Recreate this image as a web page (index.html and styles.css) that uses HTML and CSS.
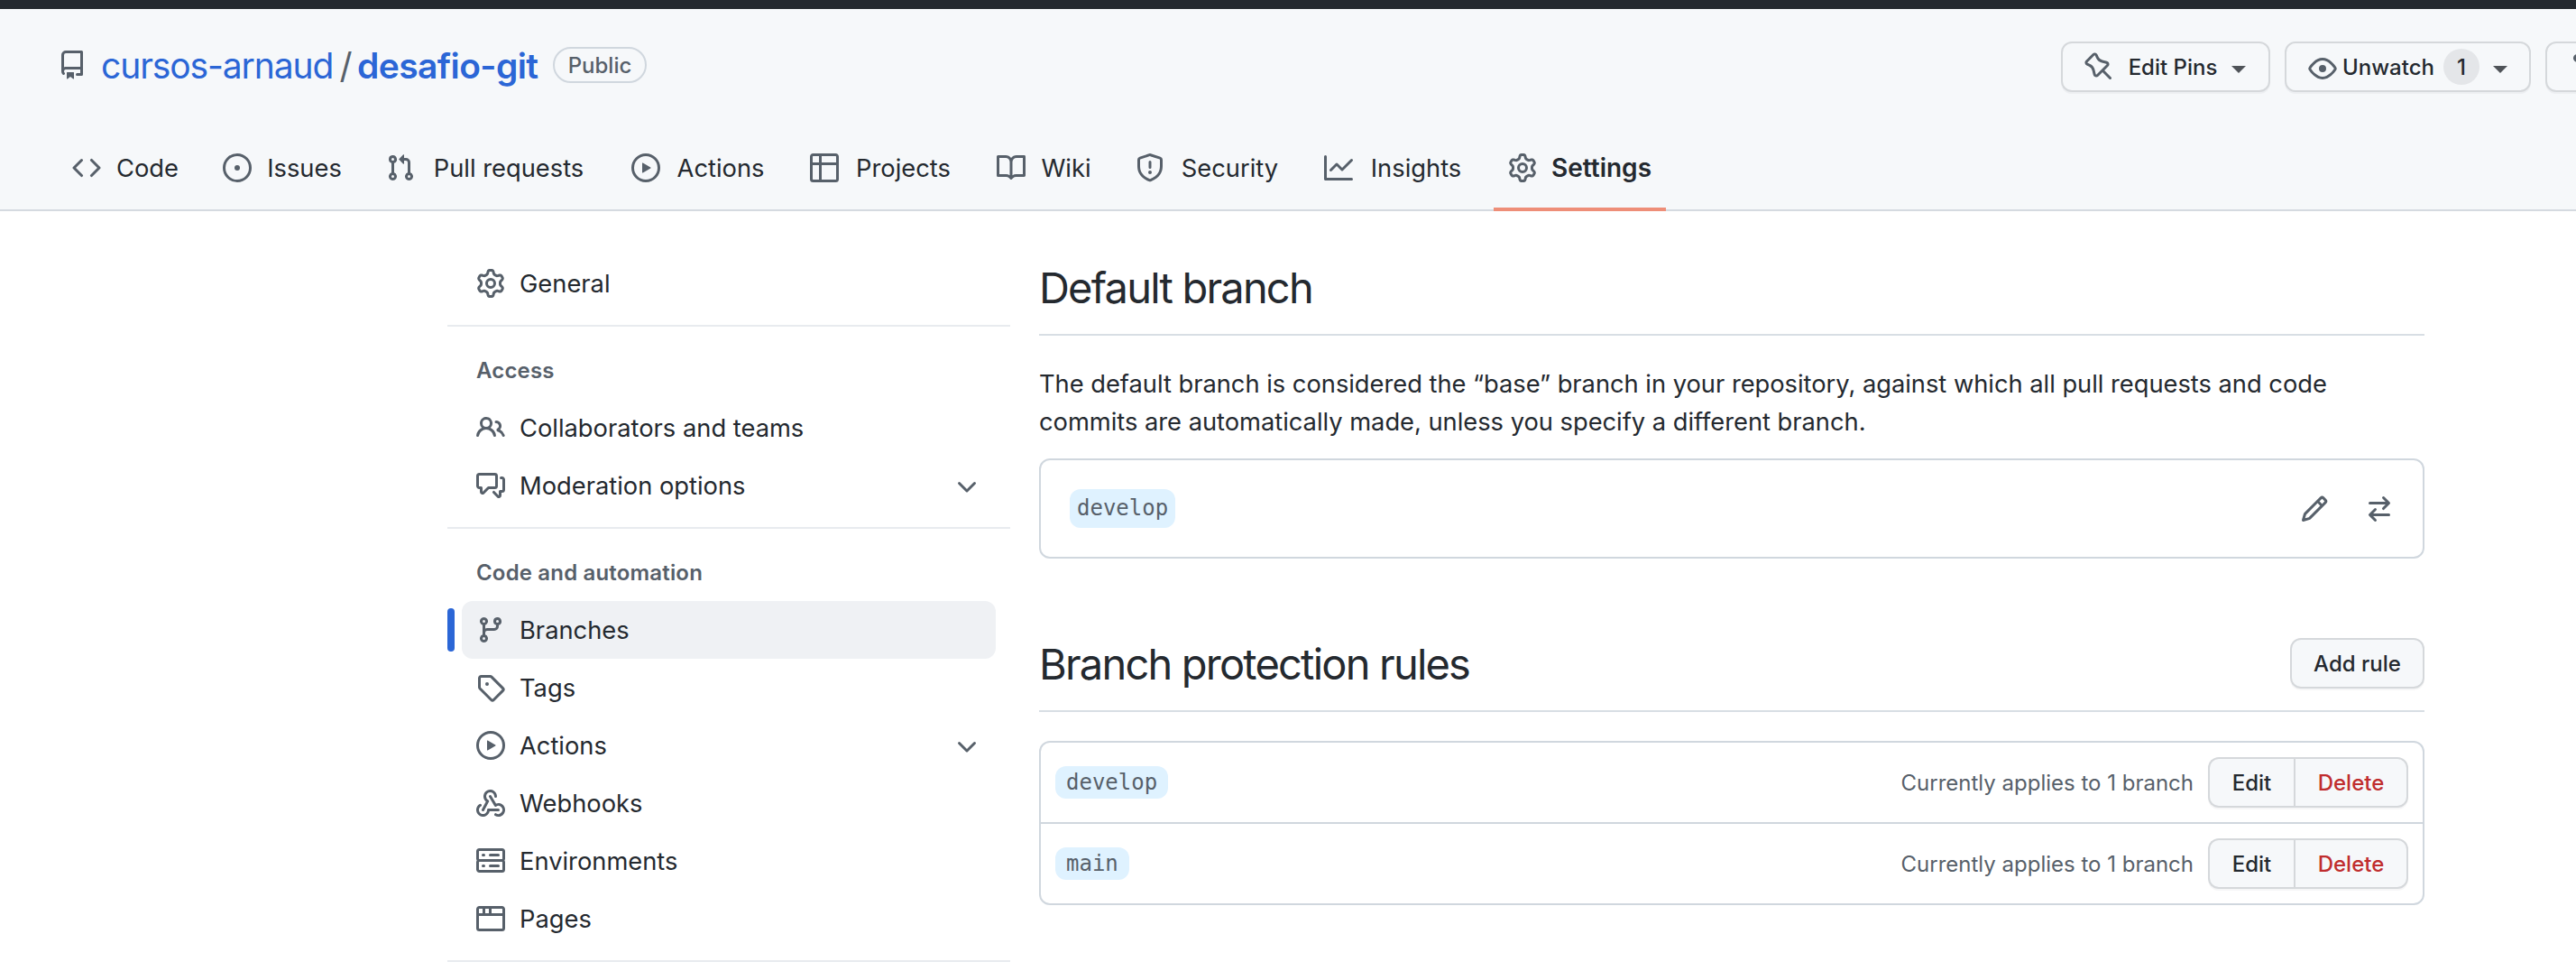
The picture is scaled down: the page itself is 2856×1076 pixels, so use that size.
FILE: index.html
```html
<!DOCTYPE html>
<html lang="en">
<head>
<meta charset="utf-8">
<title>Branches</title>
<link rel="stylesheet" href="styles.css">
</head>
<body>
<svg class="sprite" width="0" height="0">
<symbol id="repo" viewBox="0 0 16 16"><path fill-rule="evenodd" d="M2 2.5A2.5 2.5 0 014.5 0h8.75a.75.75 0 01.75.75v12.5a.75.75 0 01-.75.75h-2.5a.75.75 0 110-1.5h1.75v-2h-8a1 1 0 00-.714 1.7.75.75 0 01-1.072 1.05A2.495 2.495 0 012 11.5v-9zm10.500-1V9h-8c-.356 0-.694.074-1 .208V2.500a1 1 0 011-1h8zM5 12.250v3.250a.250.250 0 00.400.200l1.450-1.087a.250.250 0 01.300 0L8.600 15.700a.250.250 0 00.400-.200v-3.250a.250.250 0 00-.250-.250h-3.500a.250.250 0 00-.250.250z"/></symbol>
<symbol id="code" viewBox="0 0 16 16"><path fill-rule="evenodd" d="M4.720 3.220a.75.75 0 011.060 1.060L2.060 8l3.720 3.720a.75.75 0 11-1.060 1.060L.470 8.530a.75.75 0 010-1.060l4.250-4.250zm6.560 0a.75.75 0 10-1.060 1.060L13.940 8l-3.720 3.720a.75.75 0 101.060 1.060l4.250-4.250a.75.75 0 000-1.060l-4.250-4.250z"/></symbol>
<symbol id="issue" viewBox="0 0 16 16"><path d="M8 9.500a1.500 1.500 0 100-3 1.500 1.500 0 000 3z"/><path fill-rule="evenodd" d="M8 0a8 8 0 100 16A8 8 0 008 0zM1.500 8a6.500 6.500 0 1113 0 6.500 6.500 0 01-13 0z"/></symbol>
<symbol id="pr" viewBox="0 0 16 16"><path fill-rule="evenodd" d="M7.177 3.073L9.573.677A.25.25 0 0110 .854v4.792a.25.25 0 01-.427.177L7.177 3.427a.25.25 0 010-.354zM3.750 2.500a.75.75 0 100 1.500.75.75 0 000-1.500zm-2.250.750a2.250 2.250 0 113 2.122v5.256a2.251 2.251 0 11-1.500 0V5.372A2.250 2.250 0 011.500 3.250zM11 2.500h-1V4h1a1 1 0 011 1v5.628a2.251 2.251 0 101.500 0V5A2.500 2.500 0 0011 2.500zm1 10.250a.75.75 0 111.500 0 .75.75 0 01-1.500 0zM3.750 12a.75.75 0 100 1.500.75.75 0 000-1.500z"/></symbol>
<symbol id="play" viewBox="0 0 16 16"><path fill-rule="evenodd" d="M1.500 8a6.500 6.500 0 1113 0 6.500 6.500 0 01-13 0zM8 0a8 8 0 100 16A8 8 0 008 0zM6.379 5.227A.25.25 0 006 5.442v5.117a.25.25 0 00.379.214l4.264-2.559a.25.25 0 000-.428L6.379 5.227z"/></symbol>
<symbol id="table" viewBox="0 0 16 16"><path fill-rule="evenodd" d="M0 1.750C0 .784.784 0 1.750 0h12.500C15.216 0 16 .784 16 1.750v12.500A1.750 1.750 0 0114.250 16H1.750A1.750 1.750 0 010 14.250V1.750zM1.500 6.500v7.750c0 .138.112.250.250.250H5v-8H1.500zM5 5H1.500V1.750a.250.250 0 01.250-.250H5V5zm1.500 1.500v8h7.750a.250.250 0 00.250-.250V6.500h-8zm8-1.500h-8V1.500h7.750a.250.250 0 01.250.250V5z"/></symbol>
<symbol id="book" viewBox="0 0 16 16"><path fill-rule="evenodd" d="M0 1.750A.75.75 0 01.750 1h4.253c1.227 0 2.317.590 3 1.501A3.744 3.744 0 0111.006 1h4.245a.75.75 0 01.750.750v10.500a.75.75 0 01-.750.750h-4.507a2.250 2.250 0 00-1.591.659l-.622.621a.75.75 0 01-1.060 0l-.622-.621A2.250 2.250 0 005.258 13H.750a.75.75 0 01-.750-.750V1.750zm8.755 3a2.250 2.250 0 012.250-2.250H14.500v9h-3.757c-.710 0-1.400.201-1.992.572l.004-7.322zm-1.504 7.324l.004-5.073-.002-2.253A2.250 2.250 0 005.003 2.500H1.500v9h3.757a3.750 3.750 0 011.994.574z"/></symbol>
<symbol id="shield" viewBox="0 0 16 16"><path fill-rule="evenodd" d="M7.467.133a1.750 1.750 0 011.066 0l5.250 1.680A1.750 1.750 0 0115 3.480V7c0 1.566-.320 3.182-1.303 4.682-.983 1.498-2.585 2.813-5.032 3.855a1.700 1.700 0 01-1.330 0c-2.447-1.042-4.049-2.357-5.032-3.855C1.320 10.182 1 8.566 1 7V3.480a1.750 1.750 0 011.217-1.667l5.250-1.680zm.610 1.429a.25.25 0 00-.153 0l-5.250 1.680a.25.25 0 00-.174.238V7c0 1.358.275 2.666 1.057 3.860.784 1.194 2.121 2.340 4.366 3.297a.2.2 0 00.154 0c2.245-.956 3.582-2.104 4.366-3.298C13.225 9.666 13.500 8.360 13.500 7V3.480a.25.25 0 00-.174-.237l-5.250-1.680zM9 10.500a1 1 0 11-2 0 1 1 0 012 0zm-.250-5.750a.75.75 0 10-1.500 0v3a.75.75 0 001.500 0v-3z"/></symbol>
<symbol id="graph" viewBox="0 0 16 16"><path fill-rule="evenodd" d="M1.500 1.750a.75.75 0 00-1.500 0v12.500c0 .414.336.750.750.750h14.500a.75.75 0 000-1.500H1.500V1.750zm14.280 2.530a.75.75 0 00-1.060-1.060L10 7.940 7.530 5.470a.75.75 0 00-1.060 0L3.220 8.720a.75.75 0 001.060 1.060L7 7.060l2.470 2.470a.75.75 0 001.060 0l5.250-5.250z"/></symbol>
<symbol id="gear" viewBox="0 0 16 16"><path fill-rule="evenodd" d="M7.429 1.525a6.593 6.593 0 011.142 0c.036.003.108.036.137.146l.289 1.105c.147.560.550.967.997 1.189.174.086.341.183.501.290.417.278.970.423 1.530.270l1.102-.303c.110-.030.175.016.195.046.219.310.410.641.573.989.014.031.022.110-.059.190l-.815.806c-.411.406-.562.957-.530 1.456a4.588 4.588 0 010 .582c-.032.499.119 1.050.530 1.456l.815.806c.080.080.073.159.059.190a6.494 6.494 0 01-.573.990c-.020.029-.086.074-.195.045l-1.103-.303c-.559-.153-1.112-.008-1.529.270-.160.107-.327.204-.500.290-.449.222-.851.628-.998 1.189l-.289 1.105c-.029.110-.101.143-.137.146a6.613 6.613 0 01-1.142 0c-.036-.003-.108-.037-.137-.146l-.289-1.105c-.147-.560-.550-.967-.997-1.189a4.502 4.502 0 01-.501-.290c-.417-.278-.970-.423-1.530-.270l-1.102.303c-.110.030-.175-.016-.195-.046a6.492 6.492 0 01-.573-.989c-.014-.031-.022-.110.059-.190l.815-.806c.411-.406.562-.957.530-1.456a4.587 4.587 0 010-.582c.032-.499-.119-1.050-.530-1.456l-.815-.806c-.080-.080-.073-.159-.059-.190a6.440 6.440 0 01.573-.990c.020-.029.086-.075.195-.045l1.103.303c.559.153 1.112.008 1.529-.270.160-.107.327-.204.500-.290.449-.222.851-.628.998-1.189l.289-1.105c.029-.110.101-.143.137-.146zM8 0c-.236 0-.470.010-.701.030-.743.065-1.290.615-1.458 1.261l-.290 1.106c-.017.066-.078.158-.211.224a5.994 5.994 0 00-.668.386c-.123.082-.233.090-.300.071L3.270 2.776c-.644-.177-1.392.020-1.820.630a7.977 7.977 0 00-.704 1.217c-.315.675-.111 1.422.363 1.891l.815.806c.050.048.098.147.088.294a6.084 6.084 0 000 .772c.010.147-.038.246-.088.294l-.815.806c-.474.469-.678 1.216-.363 1.891.200.428.436.835.704 1.218.428.609 1.176.806 1.820.630l1.103-.303c.066-.019.176-.011.299.071.213.143.436.272.668.386.133.066.194.158.212.224l.289 1.106c.169.646.715 1.196 1.458 1.260a8.094 8.094 0 001.402 0c.743-.064 1.290-.614 1.458-1.260l.290-1.106c.017-.066.078-.158.211-.224a5.980 5.980 0 00.668-.386c.123-.082.233-.090.300-.071l1.102.302c.644.177 1.392-.020 1.820-.630.268-.382.505-.789.704-1.217.315-.675.111-1.422-.364-1.891l-.814-.806c-.050-.048-.098-.147-.088-.294a6.100 6.100 0 000-.772c-.010-.147.039-.246.088-.294l.814-.806c.475-.469.679-1.216.364-1.891a7.992 7.992 0 00-.704-1.218c-.428-.609-1.176-.806-1.820-.630l-1.103.303c-.066.019-.176.011-.299-.071a5.991 5.991 0 00-.668-.386c-.133-.066-.194-.158-.212-.224L10.160 1.290C9.990.645 9.444.095 8.701.031A8.094 8.094 0 008 0zm1.500 8a1.500 1.500 0 11-3 0 1.500 1.500 0 013 0zM11 8a3 3 0 11-6 0 3 3 0 016 0z"/></symbol>
<symbol id="people" viewBox="0 0 16 16"><path fill-rule="evenodd" d="M5.500 3.500a2 2 0 100 4 2 2 0 000-4zM2 5.500a3.500 3.500 0 115.898 2.549 5.507 5.507 0 013.034 4.084.75.75 0 11-1.482.235 4.001 4.001 0 00-7.900 0 .75.75 0 01-1.482-.236A5.507 5.507 0 013.102 8.050 3.490 3.490 0 012 5.500zM11 4a.75.75 0 100 1.500 1.500 1.500 0 01.666 2.844.75.75 0 00-.416.672v.352a.75.75 0 00.574.730c1.200.289 2.162 1.200 2.522 2.372a.75.75 0 101.434-.440 5.010 5.010 0 00-2.560-3.012A3 3 0 0011 4z"/></symbol>
<symbol id="comments" viewBox="0 0 16 16"><path fill-rule="evenodd" d="M1.500 2.750a.25.25 0 01.250-.250h8.500a.25.25 0 01.250.250v5.500a.25.25 0 01-.250.250h-3.500a.75.75 0 00-.530.220L3.500 11.440V9.250a.75.75 0 00-.750-.750h-1a.25.25 0 01-.250-.250v-5.500zM1.750 1A1.750 1.750 0 000 2.750v5.500C0 9.216.784 10 1.750 10H2v1.543a1.457 1.457 0 002.487 1.030L7.061 10h3.189A1.750 1.750 0 0012 8.250v-5.500A1.750 1.750 0 0010.250 1h-8.500zM14.500 4.750a.25.25 0 00-.250-.250h-.500a.75.75 0 110-1.500h.500c.966 0 1.750.784 1.750 1.750v5.500A1.750 1.750 0 0114.250 12H14v1.543a1.457 1.457 0 01-2.487 1.030L9.220 12.280a.75.75 0 111.060-1.060l2.220 2.220v-2.190a.75.75 0 01.750-.750h1a.25.25 0 00.250-.250v-5.500z"/></symbol>
<symbol id="chevron" viewBox="0 0 16 16"><path fill-rule="evenodd" d="M12.780 6.220a.75.75 0 010 1.060l-4.250 4.250a.75.75 0 01-1.060 0L3.220 7.280a.75.75 0 011.060-1.060L8 9.940l3.720-3.720a.75.75 0 011.060 0z"/></symbol>
<symbol id="branch" viewBox="0 0 16 16"><path fill-rule="evenodd" d="M11.750 2.500a.75.75 0 100 1.500.75.75 0 000-1.500zm-2.250.750a2.250 2.250 0 113 2.122V6A2.500 2.500 0 0110 8.500H6a1 1 0 00-1 1v1.128a2.251 2.251 0 11-1.500 0V5.372a2.250 2.250 0 111.500 0v1.836A2.492 2.492 0 016 7h4a1 1 0 001-1v-.628A2.250 2.250 0 019.500 3.250zM4.250 12a.75.75 0 100 1.500.75.75 0 000-1.500zM3.500 3.250a.75.75 0 111.500 0 .75.75 0 01-1.500 0z"/></symbol>
<symbol id="tag" viewBox="0 0 16 16"><path fill-rule="evenodd" d="M2.500 7.775V2.750a.25.25 0 01.250-.250h5.025a.25.25 0 01.177.073l6.250 6.250a.25.25 0 010 .354l-5.025 5.025a.25.25 0 01-.354 0l-6.250-6.250a.25.25 0 01-.073-.177zm-1.500 0V2.750C1 1.784 1.784 1 2.750 1h5.025c.464 0 .910.184 1.238.513l6.250 6.250a1.750 1.750 0 010 2.474l-5.026 5.026a1.750 1.750 0 01-2.474 0l-6.250-6.250A1.750 1.750 0 011 7.775zM6 5a1 1 0 100 2 1 1 0 000-2z"/></symbol>
<symbol id="webhook" viewBox="0 0 16 16"><path fill-rule="evenodd" d="M5.500 4.250a2.250 2.250 0 014.500 0 .75.75 0 001.500 0 3.750 3.750 0 10-6.140 2.889l-2.272 4.258a.75.75 0 001.324.706L7 7.250a.75.75 0 00-.309-1.015A2.250 2.250 0 015.500 4.250z"/><path d="M7.364 3.607a.75.75 0 011.030.257l2.608 4.349a3.750 3.750 0 11-.628 6.785.75.75 0 01.752-1.299 2.250 2.250 0 10-.033-3.880.75.75 0 01-1.030-.256L7.107 4.636a.75.75 0 01.257-1.030z"/><path d="M2.900 8.776A.75.75 0 012.625 9.800 2.250 2.250 0 106 11.750a.75.75 0 01.750-.751h5.500a.75.75 0 010 1.500H7.425a3.751 3.751 0 11-5.550-3.998.75.75 0 011.024.274z"/></symbol>
<symbol id="server" viewBox="0 0 16 16"><path fill-rule="evenodd" d="M1.750 1A1.750 1.750 0 000 2.750v4c0 .372.116.717.314 1a1.742 1.742 0 00-.314 1v4c0 .966.784 1.750 1.750 1.750h12.500A1.750 1.750 0 0016 12.750v-4c0-.372-.116-.717-.314-1 .198-.283.314-.628.314-1v-4A1.750 1.750 0 0014.250 1H1.750zm0 7.500a.25.25 0 00-.250.250v4c0 .138.112.250.250.250h12.500a.25.25 0 00.250-.250v-4a.25.25 0 00-.250-.250H1.750zM14.250 7a.25.25 0 00.250-.250v-4a.25.25 0 00-.250-.250H1.750a.25.25 0 00-.250.250v4c0 .138.112.250.250.250h12.500zM7 4.750A.75.75 0 017.750 4h4.500a.75.75 0 010 1.500h-4.500A.75.75 0 017 4.750zM7.750 10a.75.75 0 000 1.500h4.500a.75.75 0 000-1.500h-4.500zM3 4.750A.75.75 0 013.750 4h.500a.75.75 0 010 1.500h-.500A.75.75 0 013 4.750zM3.750 10a.75.75 0 000 1.500h.500a.75.75 0 000-1.500h-.500z"/></symbol>
<symbol id="browser" viewBox="0 0 16 16"><path fill-rule="evenodd" d="M0 2.750C0 1.784.784 1 1.750 1h12.500c.966 0 1.750.784 1.750 1.750v10.500A1.750 1.750 0 0114.250 15H1.750A1.750 1.750 0 010 13.250V2.750zm1.750-.250a.25.25 0 00-.250.250V5h2V2.500H1.750zM5 2.500V5h2V2.500H5zm3.500 0V5h6V2.750a.25.25 0 00-.250-.250H8.500zm6 4h-13v6.750c0 .138.112.250.250.250h12.500a.25.25 0 00.250-.250V6.500z"/></symbol>
<symbol id="pin" viewBox="0 0 16 16"><path fill-rule="evenodd" d="M4.456.734a1.750 1.750 0 012.826.504l.613 1.327a3.081 3.081 0 002.084 1.707l2.454.584c1.332.317 1.800 1.972.832 2.940L11.060 10l3.720 3.720a.75.75 0 11-1.061 1.060L10 11.060l-2.204 2.205c-.968.968-2.623.500-2.940-.832l-.584-2.454a3.081 3.081 0 00-1.707-2.084l-1.327-.613a1.750 1.750 0 01-.504-2.826L4.456.734zM5.920 1.866a.25.25 0 00-.404-.072L1.794 5.516a.25.25 0 00.072.404l1.328.613A4.582 4.582 0 015.730 9.630l.584 2.454a.25.25 0 00.420.120l5.470-5.470a.25.25 0 00-.120-.420L9.630 5.730a4.581 4.581 0 01-3.098-2.537L5.920 1.866z"/></symbol>
<symbol id="eye" viewBox="0 0 16 16"><path fill-rule="evenodd" d="M1.679 7.932c.412-.621 1.242-1.750 2.366-2.717C5.175 4.242 6.527 3.500 8 3.500c1.473 0 2.824.742 3.955 1.715 1.124.967 1.954 2.096 2.366 2.717a.119.119 0 010 .136c-.412.621-1.242 1.750-2.366 2.717C10.825 11.758 9.473 12.500 8 12.500c-1.473 0-2.824-.742-3.955-1.715C2.920 9.818 2.090 8.690 1.679 8.068a.119.119 0 010-.136zM8 2c-1.981 0-3.670.992-4.933 2.078C1.797 5.169.880 6.423.430 7.100a1.619 1.619 0 000 1.798c.450.678 1.367 1.932 2.637 3.024C4.329 13.008 6.019 14 8 14c1.981 0 3.670-.992 4.933-2.078 1.270-1.091 2.187-2.345 2.637-3.023a1.619 1.619 0 000-1.798c-.450-.678-1.367-1.932-2.637-3.023C11.671 2.992 9.981 2 8 2zm0 8a2 2 0 100-4 2 2 0 000 4z"/></symbol>
<symbol id="fork" viewBox="0 0 16 16"><path fill-rule="evenodd" d="M5 3.250a.75.75 0 11-1.500 0 .75.75 0 011.500 0zm0 2.122a2.250 2.250 0 10-1.500 0v.878A2.250 2.250 0 005.750 8.500h1.500v2.128a2.251 2.251 0 101.500 0V8.500h1.500a2.250 2.250 0 002.250-2.250v-.878a2.250 2.250 0 10-1.500 0v.878a.75.75 0 01-.750.750h-4.500A.75.75 0 015 6.250v-.878z"/></symbol>
<symbol id="pencil" viewBox="0 0 16 16"><path fill-rule="evenodd" d="M11.013 1.427a1.750 1.750 0 012.474 0l1.086 1.086a1.750 1.750 0 010 2.474l-8.610 8.610c-.210.210-.470.364-.756.445l-3.251.930a.75.75 0 01-.927-.928l.929-3.250a1.750 1.750 0 01.445-.758l8.610-8.610zm1.414 1.060a.25.25 0 00-.354 0L10.811 3.750l1.439 1.440 1.263-1.263a.25.25 0 000-.354l-1.086-1.086zM11.189 6.250L9.750 4.810l-6.286 6.287a.25.25 0 00-.064.108l-.558 1.953 1.953-.558a.249.249 0 00.108-.064l6.286-6.286z"/></symbol>
<symbol id="switch" viewBox="0 0 16 16"><path fill-rule="evenodd" d="M5.220 14.780a.75.75 0 001.060-1.060L4.560 12h8.690a.75.75 0 000-1.500H4.560l1.720-1.720a.75.75 0 00-1.060-1.060l-3 3a.75.75 0 000 1.060l3 3zm5.560-6.500a.75.75 0 11-1.060-1.060l1.720-1.720H2.750a.75.75 0 010-1.500h8.690L9.720 2.280a.75.75 0 011.060-1.060l3 3a.75.75 0 010 1.060l-3 3z"/></symbol>
</svg>

<header class="header">
  <div class="repo-row">
    <div class="repo-title">
      <svg class="icon"><use href="#repo"/></svg>
      <a class="owner">cursos-arnaud</a>
      <span class="slash">/</span>
      <a class="name">desafio-git</a>
      <span class="badge">Public</span>
    </div>
    <div class="repo-actions">
      <button class="btn btn-pins"><svg class="icon"><use href="#pin"/></svg><span class="t">Edit Pins</span><i class="caret"></i></button>
      <button class="btn btn-watch"><svg class="icon"><use href="#eye"/></svg><span class="t">Unwatch</span><span class="counter">1</span><i class="caret"></i></button>
      <button class="btn btn-fork"><svg class="icon"><use href="#fork"/></svg></button>
    </div>
  </div>
  <nav class="tabs">
    <a class="tab tab-code"><svg class="icon"><use href="#code"/></svg><span class="label">Code</span></a>
    <a class="tab tab-issues"><svg class="icon"><use href="#issue"/></svg><span class="label">Issues</span></a>
    <a class="tab tab-pulls"><svg class="icon"><use href="#pr"/></svg><span class="label">Pull requests</span></a>
    <a class="tab tab-actions"><svg class="icon"><use href="#play"/></svg><span class="label">Actions</span></a>
    <a class="tab tab-projects"><svg class="icon"><use href="#table"/></svg><span class="label">Projects</span></a>
    <a class="tab tab-wiki"><svg class="icon"><use href="#book"/></svg><span class="label">Wiki</span></a>
    <a class="tab tab-security"><svg class="icon"><use href="#shield"/></svg><span class="label">Security</span></a>
    <a class="tab tab-insights"><svg class="icon"><use href="#graph"/></svg><span class="label">Insights</span></a>
    <a class="tab tab-settings selected"><svg class="icon"><use href="#gear"/></svg><span class="label">Settings</span></a>
  </nav>
</header>

<div class="layout">
  <aside class="sidebar">
    <ul class="group">
      <li class="item"><svg class="icon"><use href="#gear"/></svg><span>General</span></li>
    </ul>
    <h3 class="group-title">Access</h3>
    <ul class="group">
      <li class="item"><svg class="icon"><use href="#people"/></svg><span>Collaborators and teams</span></li>
      <li class="item"><svg class="icon"><use href="#comments"/></svg><span>Moderation options</span><svg class="icon chev"><use href="#chevron"/></svg></li>
    </ul>
    <h3 class="group-title">Code and automation</h3>
    <ul class="group">
      <li class="item current"><svg class="icon"><use href="#branch"/></svg><span>Branches</span></li>
      <li class="item"><svg class="icon"><use href="#tag"/></svg><span>Tags</span></li>
      <li class="item"><svg class="icon"><use href="#play"/></svg><span>Actions</span><svg class="icon chev"><use href="#chevron"/></svg></li>
      <li class="item"><svg class="icon"><use href="#webhook"/></svg><span>Webhooks</span></li>
      <li class="item"><svg class="icon"><use href="#server"/></svg><span>Environments</span></li>
      <li class="item"><svg class="icon"><use href="#browser"/></svg><span>Pages</span></li>
    </ul>
  </aside>

  <main class="main">
    <div class="subhead"><h2>Default branch</h2></div>
    <p class="intro">The default branch is considered the “base” branch in your repository, against which all pull requests and code commits are automatically made, unless you specify a different branch.</p>
    <div class="default-box">
      <code class="ref ref-large">develop</code>
      <div class="box-actions"><svg class="icon"><use href="#pencil"/></svg><svg class="icon"><use href="#switch"/></svg></div>
    </div>

    <div class="subhead subhead-rules"><h2>Branch protection rules</h2><button class="btn btn-add"><span class="t">Add rule</span></button></div>
    <ul class="rules">
      <li class="rule"><code class="ref">develop</code><span class="applies">Currently applies to 1 branch</span><div class="btn-group"><button class="btn btn-edit"><span class="t">Edit</span></button><button class="btn btn-delete"><span class="t">Delete</span></button></div></li>
      <li class="rule"><code class="ref">main</code><span class="applies">Currently applies to 1 branch</span><div class="btn-group"><button class="btn btn-edit"><span class="t">Edit</span></button><button class="btn btn-delete"><span class="t">Delete</span></button></div></li>
    </ul>
  </main>
</div>
</body>
</html>
```
FILE: styles.css
```css
* { box-sizing: border-box; }
body {
  margin: 0;
  width: 2856px;
  height: 1076px;
  overflow: hidden;
  background: #fff;
  color: #24292f;
  font: 27.3px/42px Inter, "Liberation Sans", sans-serif;
}
ul, h2, h3, p { margin: 0; padding: 0; list-style: none; }
.sprite { display: block; position: absolute; }
.icon { width: 32px; height: 32px; flex: none; fill: #57606a; display: block; }

.header {
  height: 234px;
  border-top: 10px solid #24292f;
  border-bottom: 2px solid #d5dae0;
  background: #f6f8fa;
}
.repo-row {
  display: flex;
  justify-content: space-between;
  height: 128px;
  padding: 36px 0 0 64px;
}
.repo-title { display: flex; align-items: center; height: 52px; font-size: 39px; line-height: 52px; }
.repo-title .icon { margin: 0 16px 0 0; }
.owner, .slash, .name { padding-top: 2px; white-space: nowrap; }
.owner { width: 259px; color: #2b66d6; letter-spacing: -1.1px; }
.slash { width: 25px; text-align: center; color: #57606a; }
.name { width: 217px; color: #2b66d6; font-weight: 600; letter-spacing: -.6px; }
.badge {
  width: 104px;
  height: 40px;
  border: 2px solid #d0d7de;
  border-radius: 20px;
  color: #57606a;
  font-size: 24px;
  font-weight: 500;
  line-height: 37px;
  text-align: center;
}
.repo-actions { display: flex; gap: 16px; margin-right: -80px; }
.btn {
  display: flex;
  align-items: center;
  justify-content: center;
  height: 56px;
  margin: 0;
  padding: 0;
  border: 2px solid #d5d8db;
  border-radius: 12px;
  background: #f6f8fa;
  box-shadow: 0 2px 0 rgba(31, 35, 40, .04);
  color: #24292f;
  font: 500 24px/40px Inter, "Liberation Sans", sans-serif;
  white-space: nowrap;
}
.btn .t { display: block; padding-top: 2px; }
.repo-actions .btn { justify-content: flex-start; }
.btn-pins { width: 232px; padding-left: 24px; }
.btn-pins .t { margin-left: 16px; width: 100px; }
.btn-watch { width: 273px; padding-left: 24px; }
.btn-watch .icon { margin-top: 4px; }
.btn-watch .t { margin-left: 6px; width: 101px; }
.btn-fork { width: 114px; padding-left: 25px; }
.counter {
  width: 40px;
  height: 40px;
  margin-left: 11px;
  border-radius: 20px;
  background: #e4e6e9;
  line-height: 41px;
  text-align: center;
}
.caret { margin: 5px 0 0 15px; border: 8px solid transparent; border-top-color: #4f5358; border-bottom: 0; }

.tabs { display: flex; gap: 16px; height: 96px; padding-left: 64px; }
.tab { display: flex; align-items: center; height: 96px; padding: 0 16px; gap: 16px; }
.label { flex: 1; padding-top: 2px; text-align: center; white-space: nowrap; }
.tab-code { width: 151px; }
.tab-issues { width: 165px; }
.tab-pulls { width: 256px; }
.tab-actions { width: 182px; }
.tab-projects { width: 191px; }
.tab-wiki { width: 138px; }
.tab-security { width: 193px; }
.tab-insights { width: 188px; }
.tab-settings { width: 191px; font-size: 28px; font-weight: 600; }
.tab-settings .label { padding-top: 0; }
.selected { background: linear-gradient(#ee8e78, #ee8e78) bottom / 100% 4px no-repeat; }

.layout { display: flex; gap: 32px; padding: 48px 0 0 496px; }
.sidebar { width: 624px; }
.group { padding: 0 16px 14px; border-bottom: 2px solid #e8ebef; }
.item { position: relative; display: flex; align-items: center; gap: 16px; height: 64px; padding: 0 16px; border-radius: 12px; }
.item span { padding-top: 2px; }
.chev { margin-left: auto; }
.current { background: #eff1f4; }
.current::before {
  content: "";
  position: absolute;
  left: -16px;
  top: 8px;
  width: 8px;
  height: 48px;
  border-radius: 4px;
  background: #2b66d6;
}
.group-title {
  height: 80px;
  padding: 31px 32px 0;
  color: #57606a;
  font-size: 24px;
  font-weight: 600;
  line-height: 36px;
  letter-spacing: .17px;
}

.main { width: 1536px; }
.subhead { display: flex; justify-content: space-between; height: 90px; border-bottom: 2px solid #d8dee4; }
.subhead h2 { padding-top: 1px; font-size: 47px; font-weight: 400; line-height: 72px; letter-spacing: -1.8px; }
.intro { padding: 33px 60px 0 0; height: 136px; letter-spacing: -.02px; }
.default-box {
  display: flex;
  align-items: center;
  justify-content: space-between;
  height: 111px;
  padding: 0 32px;
  border: 2px solid #d0d7de;
  border-radius: 12px;
}
.box-actions { display: flex; gap: 40px; }
.ref {
  height: 36px;
  padding: 0 12px;
  border-radius: 12px;
  background: #dff2ff;
  color: #57606a;
  font: 24px/36px "DejaVu Sans Mono", "Liberation Mono", monospace;
}
.ref-large { height: 43px; padding: 0 8px; line-height: 42px; }
.subhead-rules { height: 82px; margin-top: 88px; }
.subhead-rules h2 { padding-top: 0; line-height: 57px; }
.btn-add { width: 149px; }
.rules { margin-top: 32px; border: 2px solid #d0d7de; border-radius: 12px; }
.rule { display: flex; align-items: center; height: 88px; padding: 0 16px; }
.rule + .rule { height: 90px; border-top: 2px solid #d0d7de; }
.applies { margin: 0 16px 0 auto; padding-top: 2px; color: #57606a; font-size: 24px; }
.btn-group { display: flex; }
.btn-edit { width: 95px; border-radius: 12px 0 0 12px; border-right: 0; }
.btn-delete { width: 127px; border-radius: 0 12px 12px 0; color: #c02d2e; }
```
